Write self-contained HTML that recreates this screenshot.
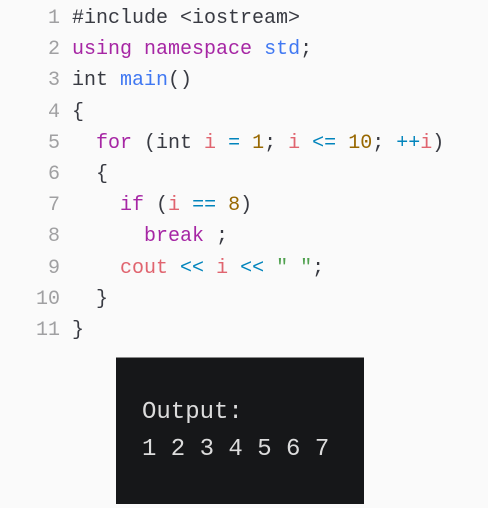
<!DOCTYPE html>
<html><head><style>
html,body{margin:0;padding:0;background:#fafafa;width:488px;height:508px;overflow:hidden}
.code{position:absolute;left:0;top:3px;font-family:"Liberation Mono",monospace;font-size:20px;line-height:31.2px;color:#383a42;white-space:pre}
.ln{display:inline-block;width:60px;text-align:right;color:#a0a0a2;margin-right:12px}
.k{color:#a626a4}.f{color:#4078f2}.v{color:#e0646f}.n{color:#986801}.o{color:#0184bc}.s{color:#50a14f}
.out{position:absolute;left:116px;top:357px;width:248px;height:147px;background:#161719;border-top:1px solid #8a8a8a;box-sizing:border-box;font-family:"Liberation Mono",monospace;font-size:24px;line-height:37px;color:#dcdcdc;padding:36px 0 0 26px;white-space:pre}
</style></head><body>
<div class="code"><span class="ln">1</span>#include &lt;iostream&gt;
<span class="ln">2</span><span class="k">using</span> <span class="k">namespace</span> <span class="f">std</span>;
<span class="ln">3</span>int <span class="f">main</span>()
<span class="ln">4</span>{
<span class="ln">5</span>  <span class="k">for</span> (int <span class="v">i</span> <span class="o">=</span> <span class="n">1</span>; <span class="v">i</span> <span class="o">&lt;=</span> <span class="n">10</span>; <span class="o">++</span><span class="v">i</span>)
<span class="ln">6</span>  {
<span class="ln">7</span>    <span class="k">if</span> (<span class="v">i</span> <span class="o">==</span> <span class="n">8</span>)
<span class="ln">8</span>      <span class="k">break</span> ;
<span class="ln">9</span>    <span class="v">cout</span> <span class="o">&lt;&lt;</span> <span class="v">i</span> <span class="o">&lt;&lt;</span> <span class="s">" "</span>;
<span class="ln">10</span>  }
<span class="ln">11</span>}</div>
<div class="out">Output:
1 2 3 4 5 6 7</div>
</body></html>
